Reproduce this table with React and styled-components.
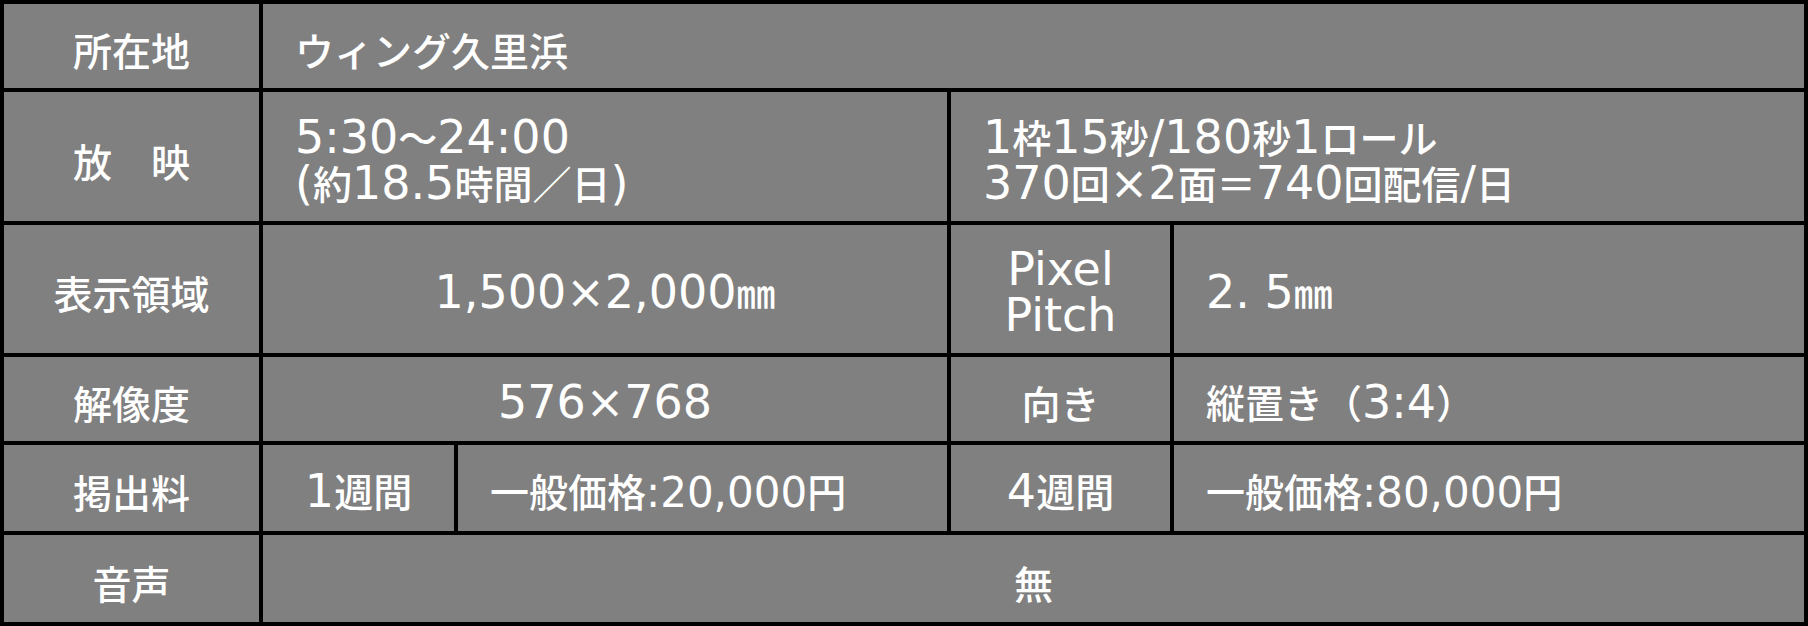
import React from "react";
import styled, { createGlobalStyle } from "styled-components";

const GlobalStyle = createGlobalStyle`
	html, body {
		margin: 0;
		padding: 0;
		background: #000;
	}
	body {
		font-family: "Noto Sans CJK JP", "Noto Sans", sans-serif;
	}
`;

const rows = [
	[
		{ text: "所在地", label: true },
		{ text: "ウィング久里浜", span: 4 },
	],
	[
		{ text: "放　映", label: true },
		{ text: "5:30～24:00\n(約18.5時間／日)", span: 2 },
		{ text: "1枠15秒/180秒1ロール\n370回×2面＝740回配信/日", span: 2 },
	],
	[
		{ text: "表示領域", label: true },
		{ text: "1,500×2,000㎜", span: 2, center: true },
		{ text: "Pixel\nPitch", center: true },
		{ text: "2. 5㎜" },
	],
	[
		{ text: "解像度", label: true },
		{ text: "576×768", span: 2, center: true },
		{ text: "向き", center: true },
		{ text: "縦置き（3:4）" },
	],
	[
		{ text: "掲出料", label: true },
		{ text: "1週間", center: true },
		{ text: "一般価格:20,000円", latin: 42 },
		{ text: "4週間", center: true },
		{ text: "一般価格:80,000円", latin: 42 },
	],
	[
		{ text: "音声", label: true },
		{ text: "無", span: 4, center: true },
	],
];

// latin runs get their own (wider, larger) face like the original artwork
function Mixed({ text, size }) {
	const parts = text.split(/([!-~×]+(?: [!-~×]+)*)/);
	return parts.map((part, i) =>
		i % 2 === 1 ? (
			<Latin key={i} $size={size}>
				{part}
			</Latin>
		) : (
			<React.Fragment key={i}>{part}</React.Fragment>
		)
	);
}

function App() {
	return (
		<>
			<GlobalStyle />
			<Table>
				{rows.map((row, i) =>
					row.map((cell, j) => (
						<Cell
							key={`${i}-${j}`}
							$span={cell.span || 1}
							$center={cell.label || cell.center}
						>
							<CellText>
								<Mixed text={cell.text} size={cell.latin || 46} />
							</CellText>
						</Cell>
					))
				)}
			</Table>
		</>
	);
}

const Table = styled.div`
	display: grid;
	grid-template-columns: 255px 191px 489px 219px 630px;
	grid-template-rows: 84px 129px 128px 84px 86px 87px;
	gap: 4px;
	padding: 4px;
	width: 1808px;
	height: 626px;
	box-sizing: border-box;
	background: #000;
`;

const Cell = styled.div`
	grid-column: span ${(p) => p.$span};
	display: flex;
	align-items: center;
	justify-content: ${(p) => (p.$center ? "center" : "flex-start")};
	padding: 6px ${(p) => (p.$center ? "0" : "32px")} 0;
	background: #808080;
	color: #fff;
	text-align: ${(p) => (p.$center ? "center" : "left")};
`;

const CellText = styled.span`
	font-size: 39px;
	font-weight: 500;
	line-height: 44px;
	white-space: pre-line;
`;

const Latin = styled.span`
	font-family: "DejaVu Sans", "Noto Sans", sans-serif;
	font-size: ${(p) => p.$size}px;
	font-weight: 400;
	line-height: 1;
`;

export default App;
